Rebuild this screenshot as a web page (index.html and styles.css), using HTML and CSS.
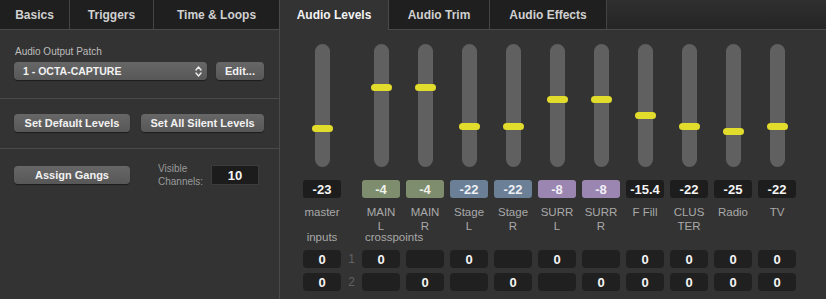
FILE: index.html
```html
<!DOCTYPE html>
<html lang="en">
<head>
    <meta charset="UTF-8">
    <title>Audio Levels</title>
    <link rel="stylesheet" href="styles.css">
</head>
<body>

<div class="tabs">
    <div class="tab tab-basics">Basics</div>
    <div class="tab tab-triggers">Triggers</div>
    <div class="tab tab-time">Time &amp; Loops</div>
    <div class="tab tab-levels active">Audio Levels</div>
    <div class="tab tab-trim">Audio Trim</div>
    <div class="tab tab-effects">Audio Effects</div>
</div>

<div class="workspace">
    <div class="sidebar">
        <div class="section section-patch">
            <div class="caption">Audio Output Patch</div>
            <div class="row">
                <div class="btn select">
                    <span>1 - OCTA-CAPTURE</span>
                    <svg width="7" height="13" viewBox="0 0 7 13">
                        <path d="M1 5 L3.5 2 L6 5 M1 8 L3.5 11 L6 8" fill="none" stroke="#eee" stroke-width="1.4" stroke-linecap="round" stroke-linejoin="round"/>
                    </svg>
                </div>
                <div class="btn btn-edit">Edit...</div>
            </div>
        </div>
        <div class="section section-levels">
            <div class="row row-levels">
                <div class="btn btn-default">Set Default Levels</div>
                <div class="btn btn-silent">Set All Silent Levels</div>
            </div>
        </div>
        <div class="section section-gangs">
            <div class="row row-gangs">
                <div class="btn btn-gangs">Assign Gangs</div>
                <div class="visible-label">Visible<br>Channels:</div>
                <div class="count">10</div>
            </div>
        </div>
    </div>

    <div class="mixer">
        <div class="strip faders" id="faders"></div>
        <div class="strip values" id="values"></div>
        <div class="strip labels" id="labels"></div>
        <div class="strip groups">
            <span class="group">inputs</span>
            <span></span>
            <span class="group group-xp">crosspoints</span>
        </div>
        <div class="strip xp" id="xp1"></div>
        <div class="strip xp xp-second" id="xp2"></div>
    </div>
</div>

<script>
    const master = { name: 'master', value: '-23', pos: 80.5, inputs: ['0', '0'] };

    const channels = [
        { name: 'MAIN<br>L', value: '-4', tint: 'green', pos: 39.5, xp: ['0', ''] },
        { name: 'MAIN<br>R', value: '-4', tint: 'green', pos: 39.5, xp: ['', '0'] },
        { name: 'Stage<br>L', value: '-22', tint: 'blue', pos: 78.5, xp: ['0', ''] },
        { name: 'Stage<br>R', value: '-22', tint: 'blue', pos: 78.5, xp: ['', '0'] },
        { name: 'SURR<br>L', value: '-8', tint: 'purple', pos: 51.5, xp: ['0', ''] },
        { name: 'SURR<br>R', value: '-8', tint: 'purple', pos: 51.5, xp: ['', '0'] },
        { name: 'F Fill', value: '-15.4', tint: '', pos: 67.5, xp: ['0', '0'] },
        { name: 'CLUS<br>TER', value: '-22', tint: '', pos: 78.5, xp: ['0', '0'] },
        { name: 'Radio', value: '-25', tint: '', pos: 83.5, xp: ['0', '0'] },
        { name: 'TV', value: '-22', tint: '', pos: 78.5, xp: ['0', '0'] }
    ];

    function fader(pos) {
        return `<div class="fader"><div class="thumb" style="top: ${pos}px"></div></div>`;
    }

    // Build each row of the strip grid: master, spacer, then channels
    const faders = [fader(master.pos), '<span></span>'];
    const values = [`<div class="value">${master.value}</div>`, '<span></span>'];
    const labels = [`<div class="label">${master.name}</div>`, '<span></span>'];
    const xp1 = [`<div class="cell">${master.inputs[0]}</div>`, '<div class="num">1</div>'];
    const xp2 = [`<div class="cell">${master.inputs[1]}</div>`, '<div class="num">2</div>'];

    channels.forEach(ch => {
        faders.push(fader(ch.pos));
        values.push(`<div class="value ${ch.tint}">${ch.value}</div>`);
        labels.push(`<div class="label">${ch.name}</div>`);
        xp1.push(`<div class="cell">${ch.xp[0]}</div>`);
        xp2.push(`<div class="cell">${ch.xp[1]}</div>`);
    });

    document.getElementById('faders').innerHTML = faders.join('');
    document.getElementById('values').innerHTML = values.join('');
    document.getElementById('labels').innerHTML = labels.join('');
    document.getElementById('xp1').innerHTML = xp1.join('');
    document.getElementById('xp2').innerHTML = xp2.join('');
</script>
</body>
</html>
```

FILE: styles.css
```css
/* General */
body {
    font-family: "Liberation Sans", Arial, sans-serif;
    background-color: #333;
    color: #eee;
    margin: 0;
    padding: 0;
    height: 299px;
    overflow: hidden;
}

/* Tab bar */
.tabs {
    display: flex;
    height: 29px;
    border-bottom: 1px solid #4a4a4a;
    background: linear-gradient(#2f2f2f, #252525);
}

.tab {
    box-sizing: border-box;
    display: flex;
    align-items: center;
    justify-content: center;
    background-color: #1f1f1f;
    border-left: 1px solid #444;
    color: #d0d0d0;
    font-size: 12px;
    font-weight: bold;
}

.tab-basics { width: 69px; border-left: none; }
.tab-triggers { width: 84px; }
.tab-time { width: 126px; }
.tab-levels { width: 110px; border-left-color: #4a4a4a; border-right: 1px solid #4a4a4a; }
.tab-trim { width: 100px; border-left: none; }
.tab-effects { width: 118px; border-right: 1px solid #444; }

.tab.active {
    background-color: #333;
    color: #f2f2f2;
    height: 30px;
}

/* Layout */
.workspace {
    display: flex;
    height: 269px;
}

.sidebar {
    box-sizing: border-box;
    width: 280px;
    border-right: 1px solid #4a4a4a;
}

.section {
    border-bottom: 1px solid #4a4a4a;
    padding: 15px 15px 16px 14px;
}

.section-patch {
    padding-top: 16px;
    padding-bottom: 18px;
}

.section-gangs {
    border-bottom: none;
    padding-top: 13px;
}

.caption {
    font-size: 10px;
    line-height: 12px;
    color: #bdbdbd;
    margin-bottom: 4px;
    padding-left: 1px;
}

.row {
    display: flex;
    align-items: center;
    gap: 9px;
}

.row-levels { gap: 11px; }

/* Buttons */
.btn {
    box-sizing: border-box;
    height: 18px;
    display: flex;
    align-items: center;
    justify-content: center;
    background: linear-gradient(#676767, #575757);
    border-radius: 4px;
    box-shadow: 0 1px 1px rgba(0, 0, 0, 0.45);
    color: #f2f2f2;
    font-size: 11px;
    font-weight: bold;
}

.select {
    width: 193px;
    justify-content: space-between;
    padding: 0 5px 0 9px;
    font-size: 10.5px;
}

.btn-edit { width: 48px; }
.btn-default { width: 116px; }
.btn-silent { width: 123px; }
.btn-gangs { width: 116px; }

.visible-label {
    margin-left: 19px;
    font-size: 10px;
    line-height: 13px;
    color: #9a9a9a;
}

.count {
    box-sizing: border-box;
    width: 48px;
    height: 20px;
    margin-left: -1px;
    display: flex;
    align-items: center;
    justify-content: center;
    background-color: #1c1c1c;
    border: 1px solid #3c3c3c;
    font-size: 13px;
    font-weight: bold;
    color: #f5f5f5;
}

/* Mixer */
.mixer {
    flex: 1;
    padding: 14px 0 0 23px;
}

.strip {
    display: grid;
    grid-template-columns: 38px 9px repeat(10, 38px);
    column-gap: 6px;
}

.faders { height: 123px; }

.fader {
    position: relative;
    width: 15px;
    height: 123px;
    margin: 0 auto;
    background-color: #606060;
    border-radius: 8px;
}

.thumb {
    position: absolute;
    left: -3px;
    width: 21px;
    height: 7px;
    border-radius: 4px;
    background-color: #e2dc2c;
}

.values { margin-top: 13px; }

.value {
    height: 18px;
    display: flex;
    align-items: center;
    justify-content: center;
    background-color: #1d1d1d;
    border-radius: 3px;
    font-size: 13px;
    font-weight: bold;
    color: #f5f5f5;
}

.value.green { background-color: #7e8d6d; color: #eef0ea; }
.value.blue { background-color: #6b7f97; color: #edf0f4; }
.value.purple { background-color: #9a86b0; color: #f2eff6; }

.labels {
    margin-top: 7px;
    height: 25px;
}

.label {
    text-align: center;
    font-size: 11.5px;
    line-height: 14px;
    color: #a9a9a9;
    white-space: nowrap;
}

.groups { height: 14px; }

.group {
    text-align: center;
    font-size: 11.5px;
    line-height: 14px;
    color: #a9a9a9;
}

.group-xp {
    grid-column: 3 / span 3;
    text-align: left;
    padding-left: 3px;
}

.xp { margin-top: 6px; }
.xp-second { margin-top: 5px; }

.cell {
    height: 18px;
    display: flex;
    align-items: center;
    justify-content: center;
    background-color: #202020;
    border-radius: 4px;
    font-size: 13px;
    font-weight: bold;
    color: #f5f5f5;
}

.num {
    display: flex;
    align-items: center;
    justify-content: center;
    font-size: 12px;
    color: #626262;
}
```
